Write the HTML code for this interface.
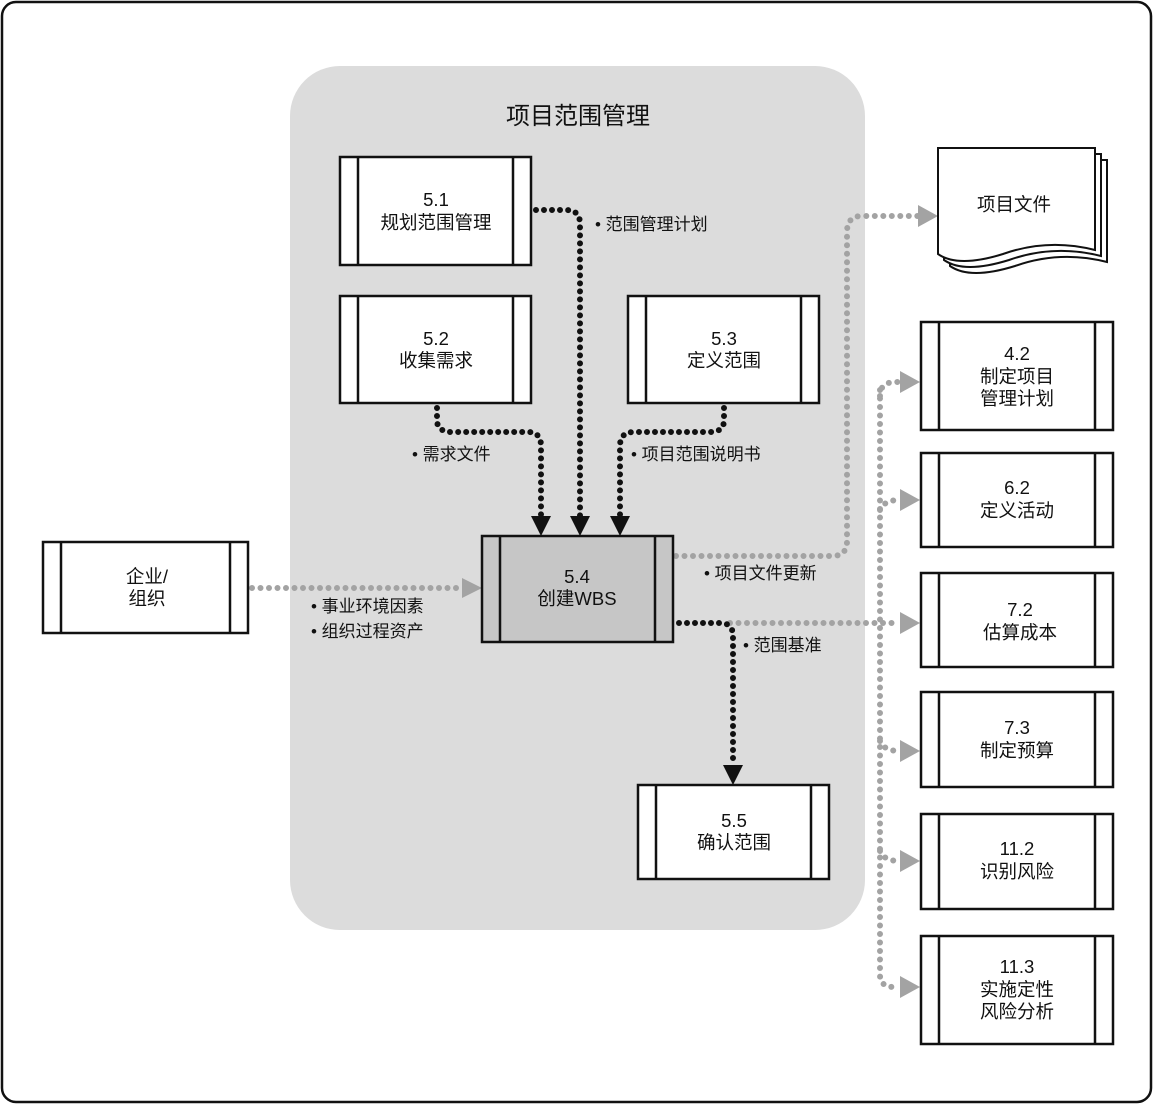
<!DOCTYPE html>
<html><head><meta charset="utf-8"><style>
html,body{margin:0;padding:0;background:#fff;}
svg{display:block;}
text{font-family:"Liberation Sans","Noto Sans CJK SC",sans-serif;fill:#111;}
</style></head><body>
<svg width="1154" height="1105" viewBox="0 0 1154 1105" xmlns="http://www.w3.org/2000/svg">
<rect x="2" y="2" width="1149" height="1100" rx="14" fill="#fff" stroke="#111" stroke-width="2.5"/>
<rect x="290" y="66" width="575" height="864" rx="50" fill="#dcdcdc"/>
<text x="578" y="124" font-size="24" text-anchor="middle">项目范围管理</text>

<g fill="none" stroke="#a3a3a3" stroke-width="6" stroke-linecap="round" stroke-dasharray="0 8.5">
<path d="M252 588 H462"/>
<path d="M676 556 H832 Q847 556 847 541 V232 Q847 216 862 216 H918"/>
<path d="M730 623 H900"/>
<path d="M880 396 Q880 382 896 382 H900"/>
<path d="M880 390 V975 Q880 987 894 987 H900"/>
<path d="M880 510 Q884 500 900 500"/>
<path d="M880 741 Q884 751 900 751"/>
<path d="M880 851 Q884 861 900 861"/>
</g>
<g fill="#a3a3a3">
<polygon points="462,578 482,588 462,598"/>
<polygon points="918,205 938,216 918,227"/>
<polygon points="900,371 920,382 900,393"/>
<polygon points="900,489 920,500 900,511"/>
<polygon points="900,612 920,623 900,634"/>
<polygon points="900,740 920,751 900,762"/>
<polygon points="900,850 920,861 900,872"/>
<polygon points="900,976 920,987 900,998"/>
</g>

<g fill="none" stroke="#111" stroke-width="6" stroke-linecap="round" stroke-dasharray="0 8">
<path d="M536 210 H566 Q580 210 580 224 V518"/>
<path d="M437 408 V420 Q437 432 452 432 H528 Q541 432 541 446 V518"/>
<path d="M724 408 V420 Q724 432 710 432 H634 Q620 432 620 446 V518"/>
<path d="M679 623 H720 Q733 623 733 636 V766"/>
</g>
<g fill="#111">
<polygon points="570,516 590,516 580,536"/>
<polygon points="531,516 551,516 541,536"/>
<polygon points="610,516 630,516 620,536"/>
<polygon points="723,765 743,765 733,785"/>
</g>

<g stroke="#111" stroke-width="2.5" fill="#fff">
<rect x="340" y="157" width="191" height="108"/><path d="M358 157V265M513 157V265"/>
<rect x="340" y="296" width="191" height="107"/><path d="M358 296V403M513 296V403"/>
<rect x="628" y="296" width="191" height="107"/><path d="M646 296V403M801 296V403"/>
<rect x="482" y="536" width="191" height="106" fill="#c6c6c6"/><path d="M500 536V642M655 536V642"/>
<rect x="638" y="785" width="191" height="94"/><path d="M656 785V879M811 785V879"/>
<rect x="43" y="542" width="205" height="91"/><path d="M61 542V633M230 542V633"/>
<rect x="921" y="322" width="192" height="108"/><path d="M939 322V430M1095 322V430"/>
<rect x="921" y="453" width="192" height="94"/><path d="M939 453V547M1095 453V547"/>
<rect x="921" y="573" width="192" height="94"/><path d="M939 573V667M1095 573V667"/>
<rect x="921" y="692" width="192" height="95"/><path d="M939 692V787M1095 692V787"/>
<rect x="921" y="814" width="192" height="95"/><path d="M939 814V909M1095 814V909"/>
<rect x="921" y="936" width="192" height="108"/><path d="M939 936V1044M1095 936V1044"/>
</g>

<g stroke="#111" stroke-width="2" fill="#fff">
<path d="M950 160 H1107 V262 Q1060 250 1015 266 Q970 280 950 266 Z"/>
<path d="M944 154 H1101 V256 Q1054 244 1009 260 Q964 274 944 260 Z"/>
<path d="M938 148 H1095 V250 Q1048 238 1003 254 Q958 268 938 254 Z"/>
</g>

<g font-size="18.5" text-anchor="middle">
<text x="436" y="206">5.1</text><text x="436" y="229">规划范围管理</text>
<text x="436" y="345">5.2</text><text x="436" y="367">收集需求</text>
<text x="724" y="345">5.3</text><text x="724" y="367">定义范围</text>
<text x="577" y="583">5.4</text><text x="577" y="605">创建WBS</text>
<text x="734" y="827">5.5</text><text x="734" y="849">确认范围</text>
<text x="147" y="583">企业/</text><text x="147" y="605">组织</text>
<text x="1014" y="211">项目文件</text>
<text x="1017" y="360">4.2</text><text x="1017" y="383">制定项目</text><text x="1017" y="405">管理计划</text>
<text x="1017" y="494">6.2</text><text x="1017" y="517">定义活动</text>
<text x="1020" y="616">7.2</text><text x="1020" y="639">估算成本</text>
<text x="1017" y="734">7.3</text><text x="1017" y="757">制定预算</text>
<text x="1017" y="855">11.2</text><text x="1017" y="878">识别风险</text>
<text x="1017" y="973">11.3</text><text x="1017" y="996">实施定性</text><text x="1017" y="1018">风险分析</text>
</g>

<g font-size="17">
<text x="595" y="230">• 范围管理计划</text>
<text x="412" y="460">• 需求文件</text>
<text x="631" y="460">• 项目范围说明书</text>
<text x="704" y="579">• 项目文件更新</text>
<text x="311" y="612">• 事业环境因素</text>
<text x="311" y="637">• 组织过程资产</text>
<text x="743" y="651">• 范围基准</text>
</g>
</svg>
</body></html>
